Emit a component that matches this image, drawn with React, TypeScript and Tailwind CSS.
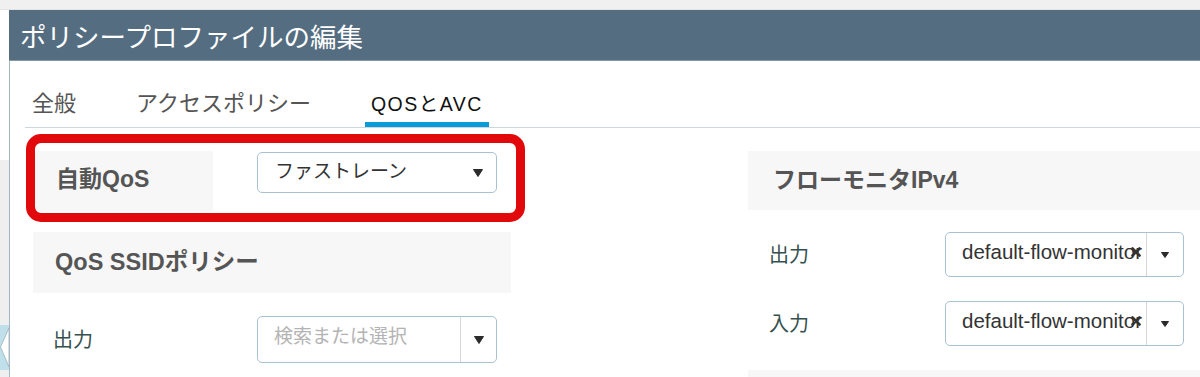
import React from "react";

const FONT = '"Liberation Sans", "Noto Sans CJK JP", sans-serif';

function Tri({ w = 10, h = 8 }: { w?: number; h?: number }) {
  return (
    <svg width={w} height={h} viewBox={`0 0 ${w} ${h}`}>
      <path d={`M0.5 0.5 L${w - 0.5} 0.5 L${w / 2} ${h - 0.5} Z`} fill="#2b2b2b" stroke="#2b2b2b" strokeWidth="1" strokeLinejoin="round" />
    </svg>
  );
}

function XIcon() {
  return (
    <svg width="10" height="10" viewBox="0 0 10 10">
      <path d="M1.5 1.5 L8.5 8.5 M8.5 1.5 L1.5 8.5" stroke="#333" strokeWidth="2.6" strokeLinecap="round" />
    </svg>
  );
}

function FlowSelect() {
  return (
    <div className="w-[239px] h-[45px] border border-[#a7c2d3] rounded-[5px] flex items-stretch bg-white">
      <div className="relative flex-1 min-w-0 overflow-hidden flex items-center pl-[16px]">
        <span className="whitespace-nowrap text-[20.5px] text-[#333] leading-none -mt-[4px]">default-flow-monitor</span>
        <div className="absolute right-[5px] top-[14px]">
          <XIcon />
        </div>
      </div>
      <div className="w-[37px] border-l border-[#d6d6d6] flex items-center justify-center">
        <Tri w={8} h={6} />
      </div>
    </div>
  );
}

export default function App() {
  return (
    <div className="relative w-[1200px] h-[377px] overflow-hidden bg-[#f0f0f0] flex flex-col" style={{ fontFamily: FONT }}>
      <div className="h-[10px] shrink-0 bg-[#f0f0f0] border-b border-[#e4e4e4]" />
      <div className="flex flex-1 min-h-0">
        {/* left gutter of underlying page */}
        <div className="w-[9px] shrink-0 flex flex-col">
          <div className="h-[150px] bg-white" />
          <div className="h-[165px] bg-[#efefef]" />
          <div className="h-[45px] bg-[#bfe0ea] relative">
            <svg width="9" height="45" viewBox="0 0 9 45" className="absolute left-0 top-0">
              <path d="M9 3 L0.5 22 L9 42 Z" fill="#ffffff" stroke="#9bb0bd" strokeWidth="0.8" />
            </svg>
          </div>
          <div className="flex-1 bg-[#efefef]" />
        </div>

        {/* modal */}
        <div className="flex-1 flex flex-col bg-white">
          <div className="h-[51px] shrink-0 bg-[#546d80] border-b border-[#8396a5] flex items-center pl-[11px] pt-[7px] text-white text-[26.5px] leading-none whitespace-nowrap">
            ポリシープロファイルの編集
          </div>
          <div className="flex-1 border-l border-[#a3b7c7] flex flex-col">
            {/* tabs */}
            <div className="ml-[15px] pl-[1px] flex gap-[48px] border-b border-[#cfd6dc]">
              <div className="px-[6px] pt-[28px] pb-[3px] leading-[30px] text-[22px] text-[#555] border-b-[5px] border-transparent">全般</div>
              <div className="px-[6px] pt-[28px] pb-[3px] leading-[30px] text-[22px] text-[#555] border-b-[5px] border-transparent">アクセスポリシー</div>
              <div className="px-[6px] pt-[28px] pb-[3px] leading-[30px] text-[19.5px] tracking-[1.5px] text-[#111] border-b-[5px] border-[#0a9cd8]">QOSとAVC</div>
            </div>

            {/* content */}
            <div className="flex">
              {/* left column */}
              <div className="ml-[23px] w-[478px] shrink-0 flex flex-col">
                <div className="mt-[23px] flex h-[60px]">
                  <div className="w-[180px] bg-[#f7f7f7] flex items-center pl-[23px] pb-[3px] text-[23px] font-bold text-[#555] whitespace-nowrap">自動QoS</div>
                  <div className="ml-[44px] mt-[1px] w-[240px] h-[41px] border border-[#a7c2d3] rounded-[5px] flex items-center pl-[17px] pr-[13px]">
                    <span className="flex-1 text-[19px] text-[#333] leading-none -mt-[3px] whitespace-nowrap">ファストレーン</span>
                    <Tri w={10} h={8} />
                  </div>
                </div>
                <div className="mt-[21px] h-[61px] bg-[#f7f7f7] flex items-center pl-[22px] text-[23.5px] font-bold text-[#555] whitespace-nowrap">
                  QoS SSIDポリシー
                </div>
                <div className="mt-[23px] flex items-center h-[47px]">
                  <div className="w-[224px] pl-[20px] text-[20px] text-[#35504f]">出力</div>
                  <div className="w-[240px] h-[47px] border border-[#a7c2d3] rounded-[5px] flex items-stretch">
                    <div className="flex-1 flex items-center pl-[16px] text-[19px] text-[#b3b3b3] leading-none">
                      <span className="-mt-[6px]">検索または選択</span>
                    </div>
                    <div className="w-[36px] border-l border-[#d6d6d6] flex items-center justify-center">
                      <Tri w={10} h={8} />
                    </div>
                  </div>
                </div>
              </div>

              {/* right column */}
              <div className="ml-[237px] flex-1 flex flex-col">
                <div className="mt-[23px] h-[59px] bg-[#f7f7f7] flex items-center pl-[25px] text-[23px] font-bold text-[#555] whitespace-nowrap">
                  フローモニタIPv4
                </div>
                <div className="mt-[22px] flex items-center h-[45px]">
                  <div className="w-[197px] pl-[21px] text-[20px] text-[#35504f]">出力</div>
                  <FlowSelect />
                </div>
                <div className="mt-[24px] flex items-center h-[45px]">
                  <div className="w-[197px] pl-[21px] text-[20px] text-[#35504f]">入力</div>
                  <FlowSelect />
                </div>
                <div className="mt-[24px] h-[40px] bg-[#f7f7f7]" />
              </div>
            </div>
          </div>
        </div>
      </div>

      {/* red annotation */}
      <div className="absolute left-[26px] top-[134px] w-[499px] h-[88px] border-[9px] border-[#e1090b] rounded-[15px] pointer-events-none" />
    </div>
  );
}
